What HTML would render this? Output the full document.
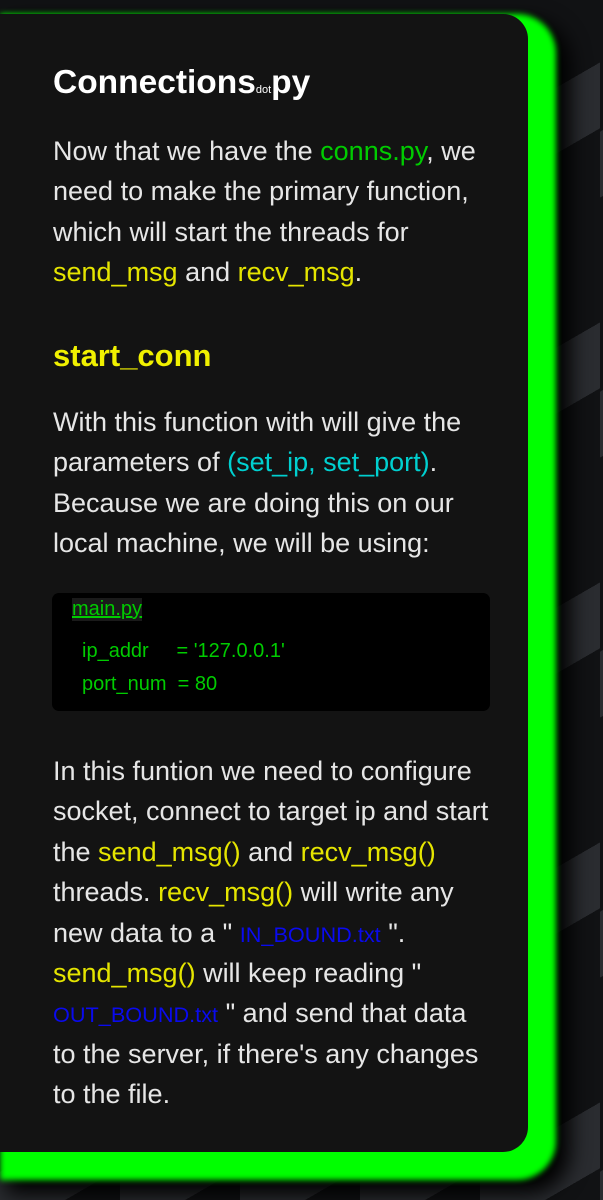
<!DOCTYPE html>
<html><head><meta charset="utf-8"><style>
html,body{margin:0;padding:0;width:603px;height:1200px;overflow:hidden;background:#111214;font-family:"Liberation Sans",sans-serif;}
.bg{position:absolute;inset:0;background:
linear-gradient(150deg,transparent 40%,#2a2c30 40%,#2a2c30 60%,transparent 60%) 0 0/120px 260px,
#111214;}
.card{position:absolute;left:0;top:14px;width:528px;height:1138px;background:#131313;border-radius:0 25px 25px 0;
box-shadow:14px 14px 6px 14px #00ff00, 24px 24px 20px 18px #000;}
.in{position:absolute;left:53px;top:0;width:445px;color:#e6e6e6;font-size:27px;}
h1{position:absolute;top:64px;margin:0;font-size:33.5px;font-weight:bold;color:#fff;white-space:nowrap;}
h1 small{font-size:11px;font-weight:normal;}
p{position:absolute;margin:0;line-height:40.4px;width:445px;}
.g{color:#00cc00}.y{color:#e5e500}.c{color:#00d0d0}.b{color:#0a0aee;font-size:21.7px;line-height:1;}
h2{position:absolute;top:338px;margin:0;font-size:31px;color:#f0f000;font-weight:bold;}
.code{position:absolute;left:52px;top:593px;width:438px;height:118px;background:#000;border-radius:7px;color:#00cc00;font-size:20px;}
.code .f{position:absolute;left:20px;top:5px;background:#1a1a1a;text-decoration:underline;}
.code .l{position:absolute;left:30px;}
</style></head><body>
<div class="bg"></div>
<div class="card"></div>
<div class="in">
<h1>Connections<small>dot</small>py</h1>
<p style="top:131px">Now that we have the <span class="g">conns.py</span>, we need to make the primary function, which will start the threads for <span class="y">send_msg</span> and <span class="y">recv_msg</span>.</p>
<h2>start_conn</h2>
<p style="top:402px">With this function with will give the parameters of <span class="c">(set_ip, set_port)</span>. Because we are doing this on our local machine, we will be using:</p>
<p style="top:751px;width:440px">In this funtion we need to configure socket, connect to target ip and start the <span class="y">send_msg()</span> and <span class="y">recv_msg()</span> threads. <span class="y">recv_msg()</span> will write any new data to a " <span class="b">IN_BOUND.txt</span> ". <span class="y">send_msg()</span> will keep reading " <span class="b">OUT_BOUND.txt</span> " and send that data to the server, if there's any changes to the file.</p>
</div>
<div class="code">
<span class="f">main.py</span>
<span class="l" style="top:47px">ip_addr&nbsp;&nbsp;&nbsp;&nbsp;&nbsp;= '127.0.0.1'</span>
<span class="l" style="top:80px">port_num&nbsp; = 80</span>
</div>
</body></html>
